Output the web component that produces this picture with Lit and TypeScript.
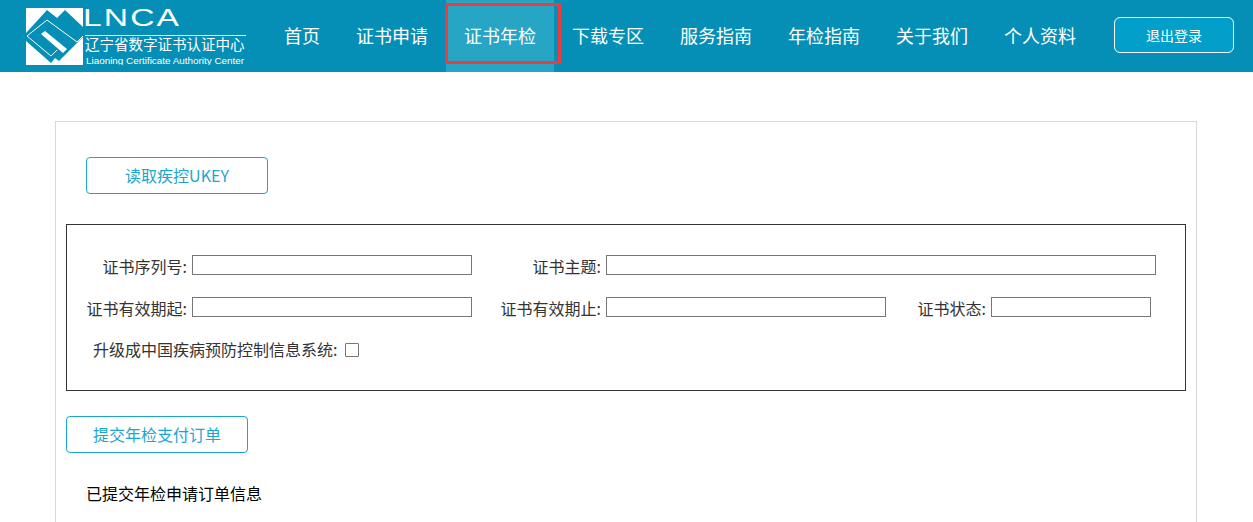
import { LitElement, html, css } from "lit";
import { customElement } from "lit/decorators.js";

const NAV = ["首页", "证书申请", "证书年检", "下载专区", "服务指南", "年检指南", "关于我们", "个人资料"];

@customElement("app-root")
export class AppRoot extends LitElement {
  static styles = css`
    :host {
      display: block;
      height: 522px;
      overflow: hidden;
      background: #fff;
      font-family: "Noto Sans CJK SC", "Liberation Sans", sans-serif;
    }
    * { box-sizing: border-box; }
    header {
      height: 72px;
      background: #058fb6;
      display: flex;
      align-items: stretch;
      padding-left: 26px;
      color: #fff;
    }
    .logo {
      width: 220px;
      margin-right: 20px;
      display: flex;
      padding-top: 8px;
      gap: 2px;
    }
    .mark { width: 57px; height: 57px; flex: none; display: block; }
    .brand { width: 161px; display: flex; flex-direction: column; }
    .lnca {
      height: 27px;
      margin-left: -2px;
      font: 400 24px/20px "Liberation Sans", sans-serif;
      letter-spacing: 1.5px;
      transform: scaleX(1.4);
      transform-origin: left center;
      white-space: nowrap;
    }
    .rule { height: 1px; background: #fff; }
    .cn { font-size: 14.5px; line-height: 18px; height: 18px; white-space: nowrap; margin-top: -1px; }
    .en {
      font: 400 9.9px/11px "Liberation Sans", sans-serif;
      margin-top: 2px;
      height: 10px;
      overflow: hidden;
      white-space: nowrap;
      padding-left: 1px;
    }
    nav { display: flex; }
    .item {
      position: relative;
      width: 108px;
      display: flex;
      align-items: center;
      justify-content: center;
      font-size: 18px;
      padding-bottom: 2px;
      white-space: nowrap;
    }
    .item.first { width: 72px; }
    .item.active { background: #26a5c4; }
    .mark-box {
      position: absolute;
      left: -1px;
      top: 3px;
      width: 116px;
      height: 61px;
      border: 3px solid #f03a3c;
    }
    .logout {
      margin: 17px 19px 0 20px;
      width: 120px;
      height: 36px;
      border: 1px solid #fff;
      border-radius: 6px;
      background: #029fcb;
      color: #fff;
      font: inherit;
      font-size: 14px;
      padding: 0;
    }
    .card {
      margin: 49px 0 0 55px;
      width: 1142px;
      height: 500px;
      border: 1px solid #d9d9d9;
      padding: 35px 10px 0;
    }
    .btn {
      display: block;
      width: 182px;
      height: 37px;
      background: #fff;
      border: 1px solid #1ba6cc;
      border-radius: 4px;
      color: #1ba6cc;
      font: inherit;
      font-size: 16px;
      padding: 0 0 2px;
    }
    .btn.read { margin-left: 20px; }
    .box {
      margin-top: 30px;
      width: 1120px;
      height: 167px;
      border: 1px solid #333;
      padding-top: 30px;
    }
    .grid {
      display: grid;
      grid-template-columns: 125px 280px 134px 280px 105px 160px 5px;
      grid-auto-rows: 20px;
      row-gap: 22px;
      color: #333;
      font-size: 16px;
    }
    .lab {
      text-align: right;
      padding-right: 5px;
      line-height: 22px;
      white-space: nowrap;
      height: 22px;
    }
    .in {
      display: block;
      height: 20px;
      width: 100%;
      border: 1px solid #767676;
      background: #fff;
      padding: 0;
      margin: 0;
    }
    .wide { grid-column: 4 / -1; width: 550px; }
    .check {
      margin-top: 20px;
      padding-left: 26px;
      display: flex;
      align-items: center;
      color: #333;
      font-size: 16px;
      line-height: 24px;
    }
    .cb {
      width: 14px;
      height: 14px;
      margin: 2px 0 0 8px;
      border: 1px solid #767676;
      border-radius: 1px;
      appearance: none;
      background: #fff;
    }
    .btn.submit { margin-top: 25px; }
    .title {
      margin: 28px 0 0 20px;
      font-size: 16px;
      line-height: 24px;
      color: #000;
    }
  `;

  render() {
    return html`
      <header>
        <div class="logo">
          <svg class="mark" viewBox="0 0 57 57" aria-hidden="true">
            <rect width="57" height="57" fill="#fff"></rect>
            <polygon fill="#058fb6" points="-1,26 21,2 31,10 39,2 57,19 57,29 33,53 29,50 25,55 -1,32"></polygon>
            <polyline fill="none" stroke="#fff" stroke-width="1" points="31,42 25,48 1,28 21,12 51,34 57,28"></polyline>
            <polygon fill="#fff" points="15,26 19,23 41,41 37,45"></polygon>
          </svg>
          <div class="brand">
            <div class="lnca">LNCA</div>
            <div class="rule"></div>
            <div class="cn">辽宁省数字证书认证中心</div>
            <div class="en">Liaoning Certificate Authority Center</div>
          </div>
        </div>
        <nav>
          ${NAV.map(
            (n, i) => html`<div class="item ${i === 0 ? "first" : ""} ${i === 2 ? "active" : ""}">
              ${n}${i === 2 ? html`<span class="mark-box"></span>` : ""}
            </div>`
          )}
        </nav>
        <button class="logout">退出登录</button>
      </header>
      <main class="card">
        <button class="btn read">读取疾控UKEY</button>
        <section class="box">
          <div class="grid">
            <div class="lab">证书序列号:</div>
            <input class="in" />
            <div class="lab">证书主题:</div>
            <input class="in wide" />
            <div class="lab">证书有效期起:</div>
            <input class="in" />
            <div class="lab">证书有效期止:</div>
            <input class="in" />
            <div class="lab">证书状态:</div>
            <input class="in" />
          </div>
          <label class="check">升级成中国疾病预防控制信息系统:<input type="checkbox" class="cb" /></label>
        </section>
        <button class="btn submit">提交年检支付订单</button>
        <div class="title">已提交年检申请订单信息</div>
      </main>
    `;
  }
}
